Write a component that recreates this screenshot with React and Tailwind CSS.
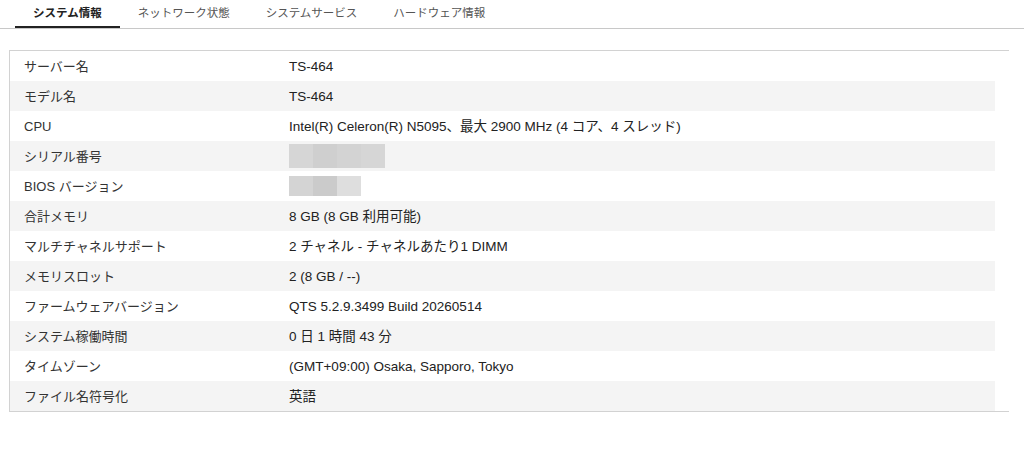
export default function App() {
  const tabs = ["システム情報", "ネットワーク状態", "システムサービス", "ハードウェア情報"];
  const rows = [
    ["サーバー名", "TS-464"],
    ["モデル名", "TS-464"],
    ["CPU", "Intel(R) Celeron(R) N5095、最大 2900 MHz (4 コア、4 スレッド)"],
    ["シリアル番号", "serial"],
    ["BIOS バージョン", "bios"],
    ["合計メモリ", "8 GB (8 GB 利用可能)"],
    ["マルチチャネルサポート", "2 チャネル - チャネルあたり1 DIMM"],
    ["メモリスロット", "2 (8 GB / --)"],
    ["ファームウェアバージョン", "QTS 5.2.9.3499 Build 20260514"],
    ["システム稼働時間", "0 日 1 時間 43 分"],
    ["タイムゾーン", "(GMT+09:00) Osaka, Sapporo, Tokyo"],
    ["ファイル名符号化", "英語"],
  ];

  const renderValue = (v) => {
    if (v === "serial") {
      return (
        <div className="flex h-[24px] w-[96px] -mt-[2px]">
          <div className="flex-1 bg-[#d6d6d6]" />
          <div className="flex-1 bg-[#cfcfcf]" />
          <div className="flex-1 bg-[#d3d3d3]" />
          <div className="flex-1 bg-[#d6d6d6]" />
        </div>
      );
    }
    if (v === "bios") {
      return (
        <div className="flex h-[20px] w-[72px] -mt-[2px]">
          <div className="flex-1 bg-[#d4d4d4]" />
          <div className="flex-1 bg-[#cbcbcb]" />
          <div className="flex-1 bg-[#dedede]" />
        </div>
      );
    }
    return v;
  };

  return (
    <div
      className="w-[1024px] h-[449px] bg-white text-[#222]"
      style={{ fontFamily: '"Liberation Sans", "Noto Sans CJK JP", sans-serif' }}
    >
      <div className="flex h-[29px] border-b border-[#c8c8c8] pl-[15px]">
        {tabs.map((t, i) => (
          <div
            key={t}
            className={
              i === 0
                ? "flex items-center px-[18px] pt-[2px] text-[11.5px] font-bold text-[#222] border-b-2 border-[#222]"
                : "flex items-center px-[18px] pt-[2px] text-[11.5px] text-[#555] border-b-2 border-transparent"
            }
          >
            {t}
          </div>
        ))}
      </div>
      <div className="ml-[9px] mt-[21px] w-[1000px] border-l border-t border-b border-[#d2d2d2] pr-[14px]">
        {rows.map(([k, v], i) => (
          <div
            key={k}
            className={
              i % 2 === 1
                ? "flex h-[30px] items-center pt-[2px] bg-[#f4f4f4]"
                : "flex h-[30px] items-center pt-[2px] bg-white"
            }
          >
            <div className="w-[279px] pl-[14px] text-[13px] text-[#333]">{k}</div>
            <div className="flex-1 text-[13.5px] text-[#222]">{renderValue(v)}</div>
          </div>
        ))}
      </div>
    </div>
  );
}
